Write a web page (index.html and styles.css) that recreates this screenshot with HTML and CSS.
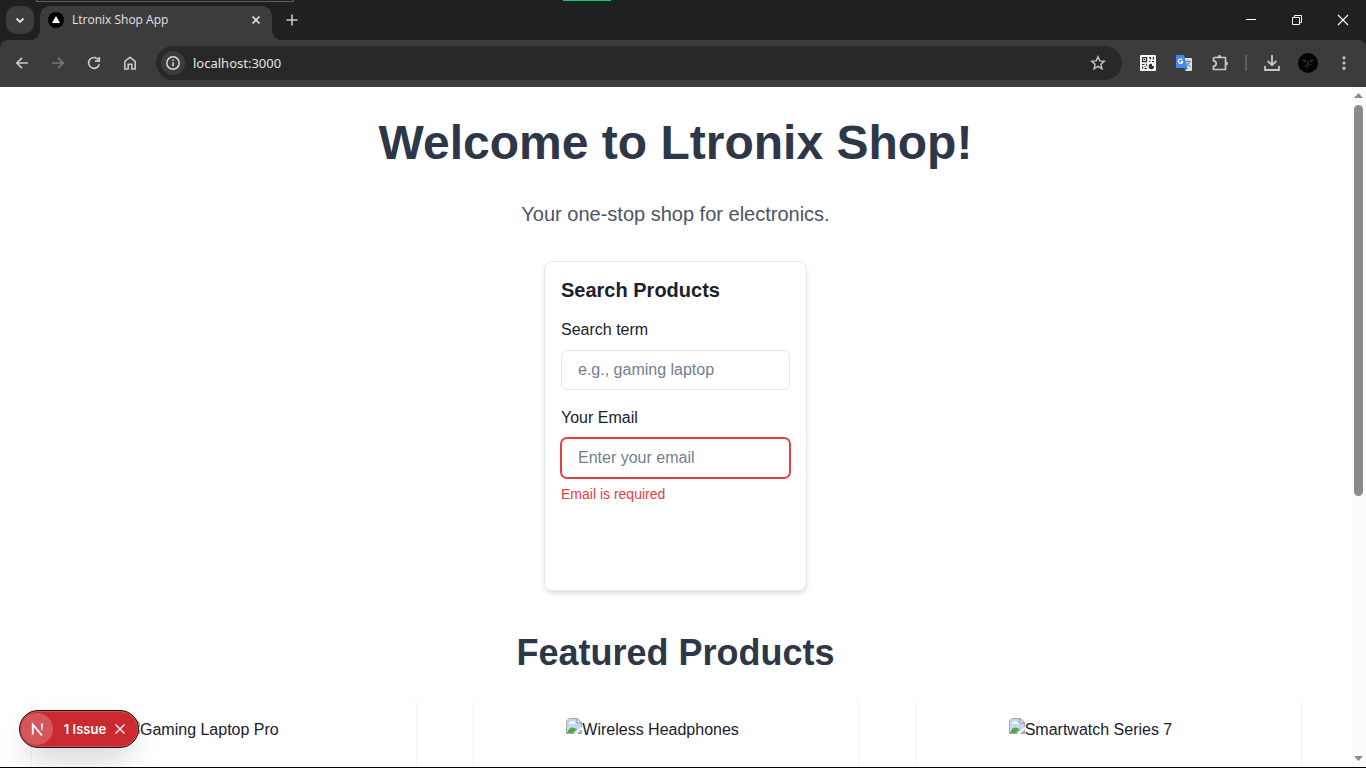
FILE: index.html
```html
<!DOCTYPE html>
<html lang="en">
<head>
<meta charset="utf-8">
<title>Ltronix Shop App</title>
<link rel="stylesheet" href="styles.css">
</head>
<body>
<header class="browser">
  <div class="tabbar">
    <span class="edge-line"></span>
    <span class="edge-accent"></span>
    <button class="tab-search" aria-label="Search tabs"><svg width="28" height="28" viewBox="0 0 28 28"><path d="M10.500 12.500l3.500 3.500 3.500-3.500" fill="none" stroke="#e3e3e3" stroke-width="1.800"/></svg></button>
    <div class="tab">
      <svg width="16" height="16" viewBox="0 0 16 16"><circle cx="8" cy="8" r="8" fill="#000"/><path d="M8 4l4 7H4z" fill="#fff"/></svg>
      <span class="tab-title">Ltronix Shop App</span>
      <button class="icon-btn" aria-label="Close tab"><svg width="16" height="16" viewBox="0 0 16 16"><path d="M4.500 4.500l7 7M11.500 4.500l-7 7" stroke="#e3e3e3" stroke-width="1.600"/></svg></button>
    </div>
    <button class="icon-btn new-tab" aria-label="New tab"><svg width="16" height="16" viewBox="0 0 16 16"><path d="M8 2.500v11M2.500 8h11" stroke="#c7c7c7" stroke-width="1.600"/></svg></button>
    <div class="window-controls">
      <button class="window-btn" aria-label="Minimize"><svg width="12" height="12" viewBox="0 0 12 12"><path d="M1 5.500h10" stroke="#fff"/></svg></button>
      <button class="window-btn" aria-label="Restore"><svg width="12" height="12" viewBox="0 0 12 12"><path d="M1.500 3.500h7v7h-7zM3.500 3.500v-2h7v7h-2" fill="none" stroke="#fff"/></svg></button>
      <button class="window-btn" aria-label="Close"><svg width="12" height="12" viewBox="0 0 12 12"><path d="M1 1l10 10M11 1L1 11" stroke="#fff" stroke-width="1.200"/></svg></button>
    </div>
  </div>
  <div class="toolbar">
    <div class="nav">
      <button class="icon-btn" aria-label="Back"><svg width="16" height="16" viewBox="0 0 16 16"><path d="M14 8H3M8 2.800L2.800 8 8 13.200" fill="none" stroke="#c7c7c7" stroke-width="1.700"/></svg></button>
      <button class="icon-btn" aria-label="Forward"><svg width="16" height="16" viewBox="0 0 16 16"><path d="M2 8h11M8 2.800L13.200 8 8 13.200" fill="none" stroke="#757575" stroke-width="1.700"/></svg></button>
      <button class="icon-btn" aria-label="Reload"><svg width="16" height="16" viewBox="0 0 16 16"><path d="M12.900 5.500A5.400 5.400 0 1 0 13.300 9.200M13.300 2v4.200H9" fill="none" stroke="#c7c7c7" stroke-width="1.700"/></svg></button>
      <button class="icon-btn" aria-label="Home"><svg width="16" height="16" viewBox="0 0 16 16"><path d="M2.800 14V6.300L8 2.300l5.200 4V14H9.800V9.300H6.200V14z" fill="none" stroke="#c7c7c7" stroke-width="1.600"/></svg></button>
    </div>
    <div class="omnibox">
      <button class="site-info" aria-label="View site information"><svg width="16" height="16" viewBox="0 0 16 16"><circle cx="8" cy="8" r="6.200" fill="none" stroke="#d8d8d8" stroke-width="1.500"/><path d="M8 7.200v4M8 4.500v1.500" stroke="#d8d8d8" stroke-width="1.500"/></svg></button>
      <input class="url" type="text" value="localhost:3000" aria-label="Address">
      <button class="icon-btn" aria-label="Bookmark"><svg width="16" height="16" viewBox="0 0 16 16"><path d="M8 1.700l1.800 4.200 4.600.4-3.500 3 1.100 4.500L8 11.400l-4 2.400 1.100-4.500-3.500-3 4.600-.4z" fill="none" stroke="#c7c7c7" stroke-width="1.400"/></svg></button>
    </div>
    <div class="extensions">
      <button class="icon-btn" aria-label="QR code"><svg width="16" height="16" viewBox="0 0 16 16"><rect width="16" height="16" rx="1" fill="#f5f5f5"/><g fill="none" stroke="#303030" stroke-width="1.200"><path d="M2.600 2.600h4v4h-4zM9 2.600h1.500v2M13.400 2v2.500M12 6.500h2M9 6.500h1.500M2 9.500h2.500M6.500 8.800v2M2.600 11.500v2.300M4.500 13.500H7"/></g><circle cx="11.300" cy="11.500" r="2.700" fill="#303030"/><path d="M4 4h1.300v1.300H4zM4.500 11h1v1h-1z" fill="#303030"/><path d="M12 8h3v3h-3z" fill="#f5f5f5"/></svg></button>
      <button class="icon-btn" aria-label="Translate"><svg width="16" height="16" viewBox="0 0 16 16"><path d="M6 3h9q1 0 1 1v11q0 1-1 1H9z" fill="#d8dfdf"/><path d="M9.500 6.500h5M12 5.500v1M13.500 6.500q-.5 3-4 5M10.500 8l3.800 4" stroke="#607d8b" fill="none"/><path d="M1 0h7l3.500 13H1q-1 0-1-1V1q0-1 1-1z" fill="#4588f2"/><path d="M8 13h3.500L9 16z" fill="#2459b8"/><path d="M6.300 4.900a2.200 2.200 0 1 0 .4 1.700H4.600" fill="none" stroke="#fff" stroke-width="1.200"/></svg></button>
      <button class="icon-btn" aria-label="Extensions"><svg width="18" height="18" viewBox="0 0 18 18"><path d="M2.500 3.500h12v4.500M14.500 11v4.500h-12v-3.300a2.700 2.700 0 0 0 0-5.400V3.500M14.500 7.500V11.500" fill="none" stroke="#c7c7c7" stroke-width="1.700" stroke-linejoin="round"/><path d="M6.500 3a2 2 0 0 1 4 0zM15 7.500a2 2 0 0 1 0 4z" fill="#c7c7c7"/></svg></button>
      <span class="divider"></span>
      <button class="icon-btn" aria-label="Downloads"><svg width="18" height="18" viewBox="0 0 18 18"><path d="M9 1v10M4.700 7L9 11.300 13.300 7M2 12v4h14v-4" fill="none" stroke="#c7c7c7" stroke-width="1.800"/></svg></button>
      <button class="icon-btn" aria-label="Profile"><svg width="20" height="20" viewBox="0 0 20 20"><circle cx="10" cy="10" r="10" fill="#050505"/><path d="M5 7l3 1M12 8l3-1M10 8v4M7 13h2M12 12l1-1" stroke="#484848"/><path d="M6 9h2M12 9h2M9 13h2" stroke="#2c2c2c"/></svg></button>
      <button class="icon-btn" aria-label="Menu"><svg width="16" height="16" viewBox="0 0 16 16" fill="#c7c7c7"><circle cx="8" cy="2.800" r="1.600"/><circle cx="8" cy="8" r="1.600"/><circle cx="8" cy="13.200" r="1.600"/></svg></button>
    </div>
  </div>
</header>
<div class="viewport">
  <main class="page">
    <h1 class="title">Welcome to Ltronix Shop!</h1>
    <p class="tagline">Your one-stop shop for electronics.</p>
    <form class="search-card">
      <h2 class="card-title">Search Products</h2>
      <div class="field">
        <label for="term">Search term</label>
        <input class="input" id="term" type="text" placeholder="e.g., gaming laptop">
      </div>
      <div class="field">
        <label for="email">Your Email</label>
        <input class="input invalid" id="email" type="email" placeholder="Enter your email" aria-describedby="email-error">
        <p class="error" id="email-error">Email is required</p>
      </div>
    </form>
    <h2 class="section-title">Featured Products</h2>
    <div class="products">
      <article class="product"><div class="product-image"><svg class="broken" width="16" height="16" viewBox="0 0 16 16"><use href="#broken-image"/></svg>Gaming Laptop Pro</div></article>
      <article class="product"><div class="product-image"><svg class="broken" width="16" height="16" viewBox="0 0 16 16"><use href="#broken-image"/></svg>Wireless Headphones</div></article>
      <article class="product"><div class="product-image"><svg class="broken" width="16" height="16" viewBox="0 0 16 16"><use href="#broken-image"/></svg>Smartwatch Series 7</div></article>
    </div>
  </main>
  <div class="scrollbar">
    <svg width="15" height="18" viewBox="0 0 15 18"><path d="M7.500 6l4.500 5H3z" fill="#8b8b8b"/></svg>
    <div class="track"><div class="thumb"></div></div>
    <svg width="15" height="18" viewBox="0 0 15 18"><path d="M7.500 12l4.500-5H3z" fill="#8b8b8b"/></svg>
  </div>
  <div class="issue">
    <button class="issue-logo" aria-label="Open developer tools"><svg width="32" height="32" viewBox="0 0 32 32"><defs><linearGradient id="fade" x1="0" y1="0" x2="0" y2="1"><stop offset="0.300" stop-color="#fff"/><stop offset="1" stop-color="#fff" stop-opacity="0.100"/></linearGradient></defs><path d="M11.800 21.500V11.500L21 22.500" fill="none" stroke="#fff" stroke-width="1.900"/><path d="M20 10.500h1.900v8H20z" fill="url(#fade)"/></svg></button>
    <button class="issue-label">1 Issue</button>
    <button class="icon-btn" aria-label="Dismiss"><svg width="12" height="12" viewBox="0 0 12 12"><path d="M1.500 1.500l9 9M10.500 1.500l-9 9" stroke="#fff" stroke-width="1.300"/></svg></button>
  </div>
</div>
<svg class="sprite" width="0" height="0" aria-hidden="true">
  <symbol id="broken-image" viewBox="0 0 16 16">
    <path d="M3 .5h8L15.500 5v4L9 15.500H.5V3z" fill="#c5d7f5"/>
    <path d="M3 6q0-2 2-2 1-2 3 0 2 0 1 2z" fill="#fff"/>
    <path d="M1 15q3-7 7-5l3 1-4 4z" fill="#55a83a"/>
    <path d="M.5 15.500V3L3 .5h8L15.500 5v4M.5 15.500H8" fill="none" stroke="#a2a6ad"/>
    <path d="M11 .5V5h4.500z" fill="#fff" stroke="#8d9198"/>
    <path d="M15.500 12v3.500H12z" fill="#b7bdc5" stroke="#9a9ea5"/>
  </symbol>
</svg>
</body>
</html>
```
FILE: styles.css
```css
* { box-sizing: border-box; }
body {
  margin: 0;
  height: 100vh;
  display: flex;
  flex-direction: column;
  overflow: hidden;
  background: #fff;
  color: #1a202c;
  font: 16px/24px "Liberation Sans", Arial, sans-serif;
  border-bottom: 1px solid #000;
}
h1, h2, p { margin: 0; }
button { padding: 0; border: 0; background: none; color: inherit; font: inherit; }
svg { display: block; flex: none; }
.sprite { position: absolute; }

.browser { flex: none; background: #1f2120; color: #e3e3e3; font-family: "Open Sans", "Noto Sans", sans-serif; }
.tabbar { position: relative; display: flex; align-items: center; height: 40px; padding-left: 6px; }
.edge-line { position: absolute; top: 0; left: 36px; width: 258px; height: 2px; border: 1px solid #606160; border-top: 0; }
.edge-accent { position: absolute; top: 0; left: 563px; width: 48px; height: 1px; background: #00d36b; }
.tab-search { width: 28px; height: 28px; border-radius: 10px; background: #3c3c3c; }
.tab {
  position: relative;
  align-self: flex-end;
  display: flex;
  align-items: center;
  gap: 8px;
  width: 232px;
  height: 34px;
  margin-left: 6px;
  padding: 0 8px 6px;
  border-radius: 10px 10px 0 0;
  background: #3c3c3c;
}
.tab::before, .tab::after { content: ""; position: absolute; bottom: 0; width: 10px; height: 10px; }
.tab::before { left: -10px; background: radial-gradient(circle at 0 0, transparent 10px, #3c3c3c 10px); }
.tab::after { right: -10px; background: radial-gradient(circle at 100% 0, transparent 10px, #3c3c3c 10px); }
.tab-title { flex: 1; font-size: 12px; line-height: 16px; white-space: nowrap; }
.icon-btn { display: flex; align-items: center; justify-content: center; flex: none; }
.new-tab { margin-left: 12px; }
.window-controls { display: flex; margin-left: auto; height: 100%; }
.window-btn { display: flex; align-items: center; justify-content: center; width: 46px; }

.toolbar { display: flex; align-items: center; height: 47px; padding: 0 12px 2px 14px; border-radius: 8px 8px 0 0; background: #3c3c3c; }
.nav { display: flex; gap: 20px; }
.omnibox {
  flex: 1;
  display: flex;
  align-items: center;
  gap: 8px;
  height: 34px;
  margin: 0 16px 0 18px;
  padding: 0 16px 0 5px;
  border-radius: 17px;
  background: #282828;
}
.site-info { display: flex; align-items: center; justify-content: center; width: 24px; height: 24px; border-radius: 50%; background: #3c3c3c; }
.url { flex: 1; min-width: 0; padding: 0; border: 0; outline: 0; background: none; color: #e3e3e3; font: 13px/20px "Noto Sans", "Open Sans", sans-serif; }
.extensions { display: flex; align-items: center; gap: 16px; }
.extensions .icon-btn { width: 20px; }
.divider { width: 2px; height: 16px; margin: 0 -1px; background: #5e5e5e; }

.viewport { position: relative; flex: 1; min-height: 0; display: flex; }
.page { flex: 1; display: flex; flex-direction: column; align-items: center; overflow: hidden; padding: 32px 32px 0; }
.title { color: #2d3748; font-size: 48px; line-height: 48px; text-align: center; }
.tagline { margin-top: 32px; color: #4a5568; font-size: 20px; line-height: 30px; }
.search-card {
  flex: none;
  display: flex;
  flex-direction: column;
  gap: 16px;
  margin-top: 32px;
  padding: 16px 16px 88px;
  border: 1px solid #e2e8f0;
  border-radius: 8px;
  box-shadow: 0 4px 6px -1px rgba(0, 0, 0, 0.1), 0 2px 4px -1px rgba(0, 0, 0, 0.06);
}
.card-title { font-size: 20px; line-height: 24px; }
.field { display: flex; flex-direction: column; gap: 8px; }
.input {
  width: 229px;
  height: 40px;
  padding: 0 16px;
  border: 1px solid #e2e8f0;
  border-radius: 6px;
  outline: 0;
  background: #fff;
  color: inherit;
  font: inherit;
}
.input::placeholder { color: #718096; opacity: 1; }
.invalid { border-color: #e53e3e; box-shadow: 0 0 0 1px #e53e3e; }
.error { color: #e53e3e; font-size: 14px; line-height: 16px; }
.section-title { margin-top: 40px; color: #2d3748; font-size: 36px; line-height: 43px; }
.products { flex: none; align-self: stretch; display: grid; grid-template-columns: repeat(3, 1fr); gap: 40px; margin-top: 24px; }
.product { max-width: 384px; height: 400px; padding: 20px; border-radius: 6px; box-shadow: 0 1px 3px rgba(0, 0, 0, 0.1), 0 1px 2px rgba(0, 0, 0, 0.06); }
.product-image { display: flex; align-items: flex-start; width: 200px; height: 200px; margin: 0 auto; white-space: nowrap; }

.scrollbar { display: flex; flex-direction: column; width: 15px; background: #fcfcfc; }
.track { flex: 1; padding: 0 3px; }
.thumb { height: 60.7%; border-radius: 5px; background: #8b8b8b; }

.issue {
  position: absolute;
  left: 19px;
  bottom: 19px;
  display: flex;
  align-items: center;
  width: 120px;
  height: 38px;
  padding: 0 12px 0 1px;
  border: 1px solid #171717;
  border-radius: 19px;
  background: #ca2a30;
  box-shadow: inset 0 0 0 1px #e5484d, 0 16px 32px -8px rgba(0, 0, 0, 0.24);
  color: #fff;
}
.issue-logo { width: 32px; height: 32px; border-radius: 50%; background: #d5565b; }
.issue-label { flex: 1; padding-left: 3px; font: 600 13px/16px Inter, sans-serif; white-space: nowrap; }
```
